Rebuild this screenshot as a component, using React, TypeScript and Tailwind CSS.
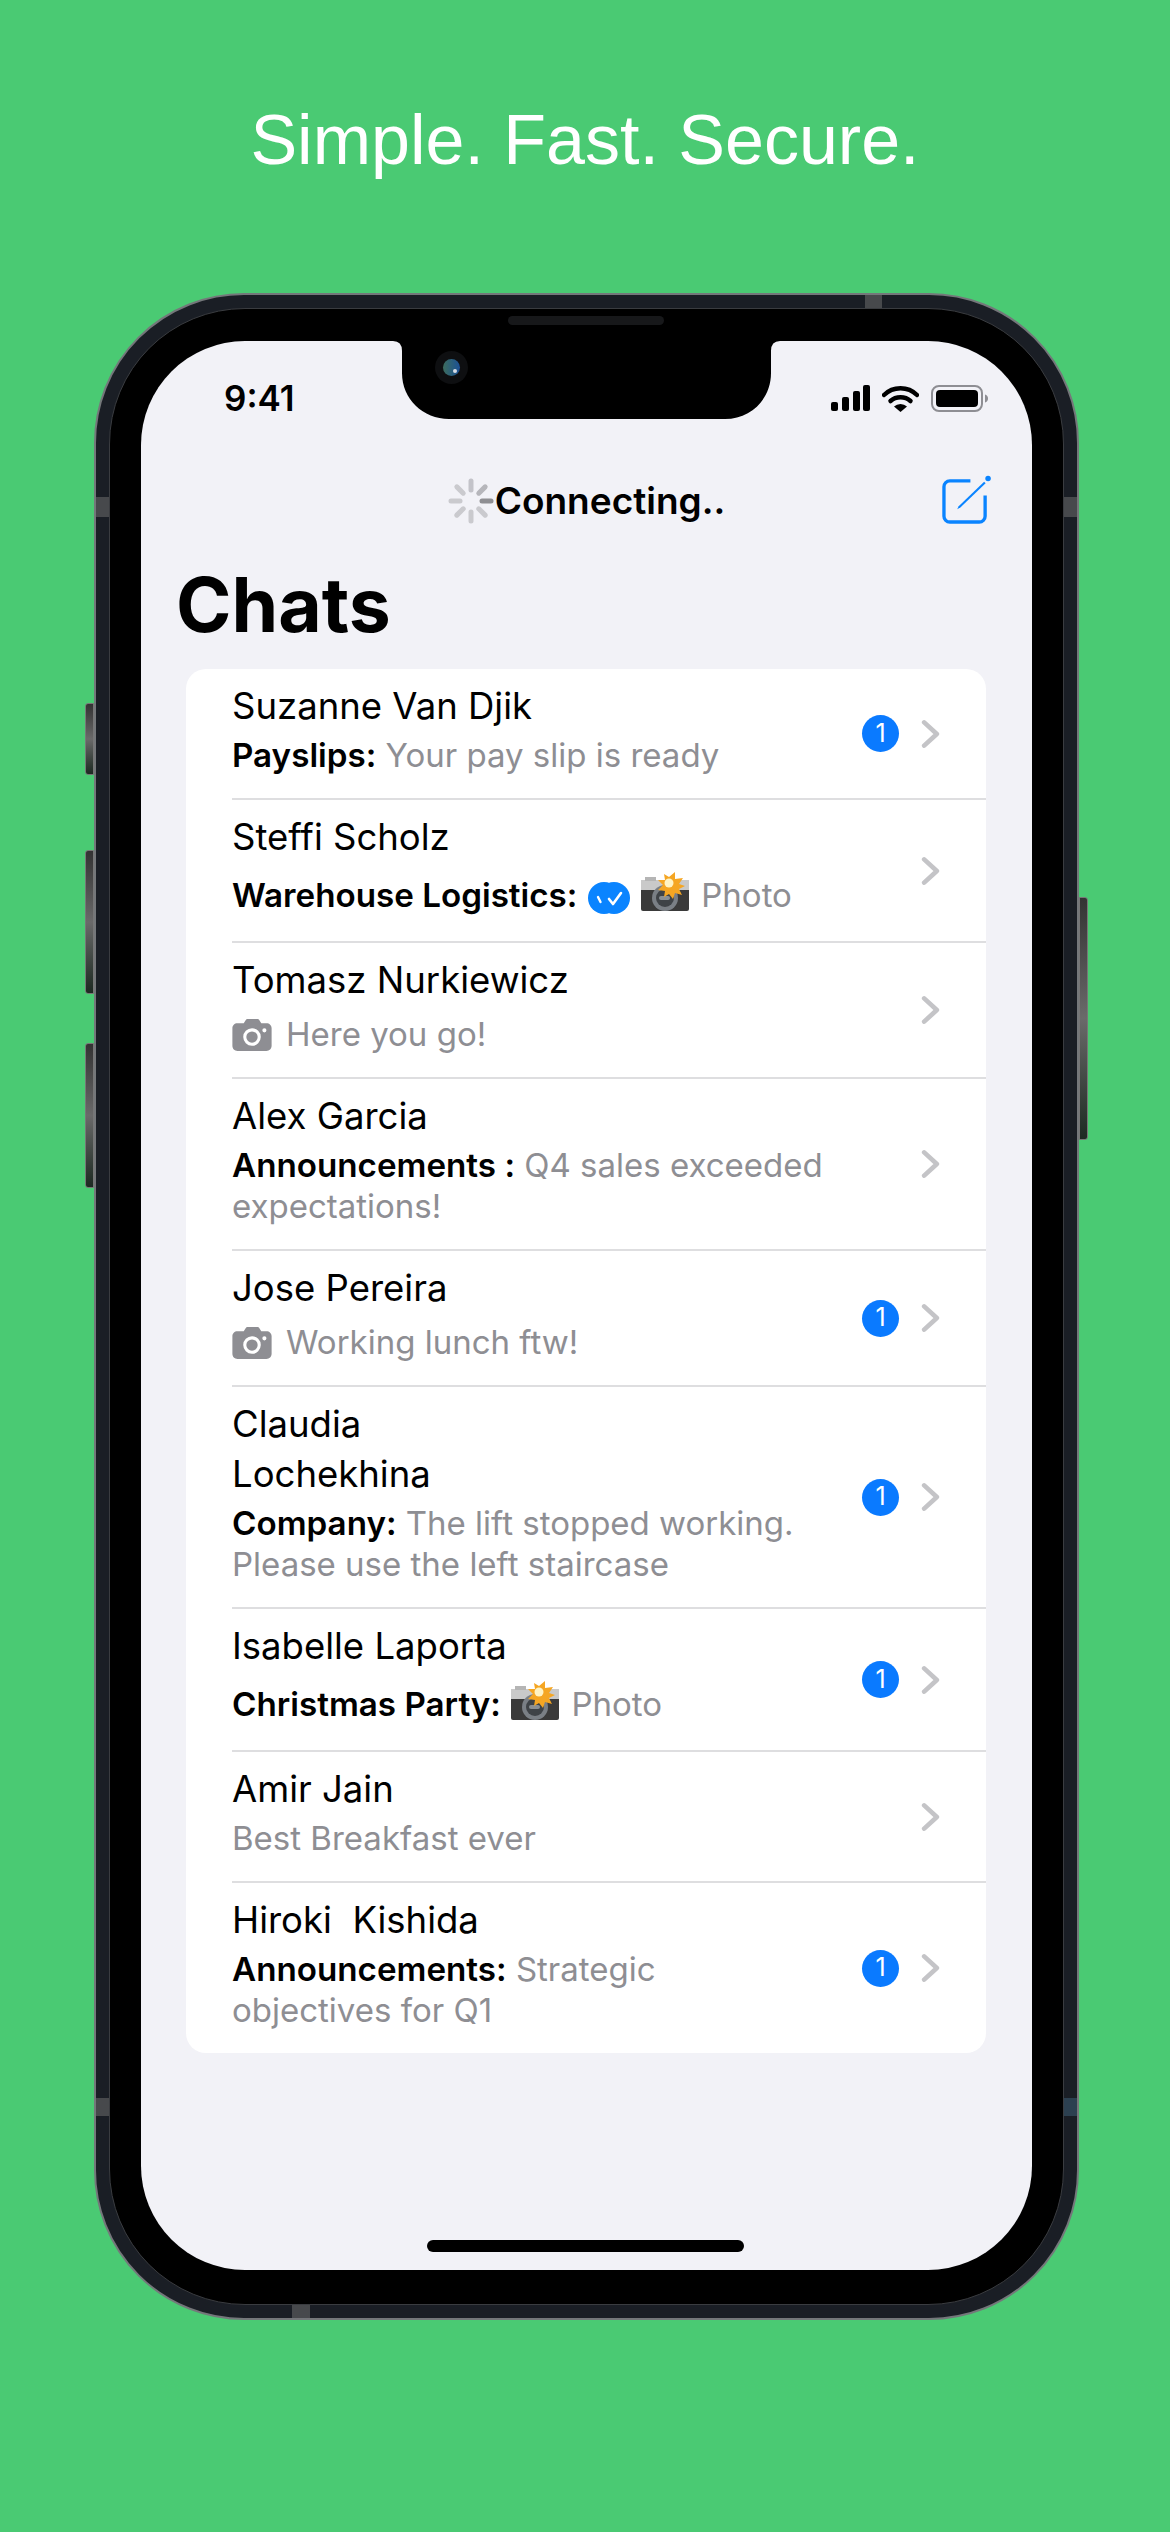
import { ReactNode } from "react";

function CameraGlyph() {
  return (
    <svg width="40" height="32" viewBox="0 0 38 31" className="inline-block align-[-5px] mr-[14px]">
      <path
        fillRule="evenodd"
        fill="#8e8e93"
        d="M5 4h6l2-3c.4-.6 1-1 2-1h9c1 0 1.600.4 2 1l2 3h5c2.800 0 5 2 5 5v17c0 3-2.200 5-5 5H5c-3 0-5-2-5-5V9c0-3 2-5 5-5zm14 5a8.500 8.500 0 1 0 0 17 8.500 8.500 0 0 0 0-17zm0 3a5.500 5.500 0 1 1 0 11 5.500 5.500 0 0 1 0-11zm12-3a2 2 0 1 0 0 4 2 2 0 0 0 0-4z"
      />
    </svg>
  );
}

function FlashCamera() {
  return (
    <svg width="50" height="42" viewBox="0 0 50 42" className="inline-block align-[-6px]">
      <rect x="1" y="9" width="48" height="31" rx="2" fill="#3a3a3a" />
      <rect x="1" y="9" width="48" height="10" fill="#c9c9c9" />
      <rect x="5" y="6" width="11" height="4" fill="#b5b5b5" />
      <circle cx="25" cy="27" r="13" fill="#7a7f85" />
      <circle cx="25" cy="27" r="9" fill="#3f4347" />
      <rect x="19" y="25" width="11" height="4" rx="2" fill="#8a8f94" />
      <path
        fill="#f5a623"
        d="M26 0l3 6 6-5 0 7 8-1-4 6 6 2-6 3 3 6-7-2-2 6-4-5-5 3 1-6-7-1 5-5-5-5 7 0-1-6 5 3z"
      />
      <circle cx="29" cy="12" r="4.500" fill="#fff3c4" />
    </svg>
  );
}

function ReadBadge() {
  return (
    <svg width="42" height="32" viewBox="0 0 42 32" className="inline-block align-[-7px] mx-[1px]">
      <circle cx="16" cy="16" r="16" fill="#0a84ff" />
      <circle cx="26" cy="16" r="16" fill="#0a84ff" />
      <path d="M10 15l2.500 5" stroke="#fff" strokeWidth="2.400" strokeLinecap="round" fill="none" />
      <path d="M21 17l4 5 8-11" stroke="#fff" strokeWidth="2.600" strokeLinecap="round" strokeLinejoin="round" fill="none" />
    </svg>
  );
}

function Chevron() {
  return (
    <svg width="19" height="30" viewBox="0 0 18 28" className="shrink-0">
      <path d="M3 3l12 11L3 25" stroke="#c4c4c7" strokeWidth="4.400" strokeLinecap="round" strokeLinejoin="round" fill="none" />
    </svg>
  );
}

function Spinner() {
  const opacities = [0.75, 0.3, 0.3, 0.3, 0.3, 0.3, 0.35, 0.45];
  return (
    <svg width="46" height="46" viewBox="-23 -23 46 46" className="shrink-0">
      {opacities.map((o, i) => (
        <rect key={i} x="8.500" y="-2.500" width="14" height="5" rx="2.500" fill="#6d6d72" opacity={o} transform={`rotate(${i * 45})`} />
      ))}
    </svg>
  );
}

function ComposeIcon() {
  return (
    <svg width="49" height="49" viewBox="0 0 50 50" className="shrink-0">
      <path d="M29 6H8a6 6 0 0 0-6 6v30a6 6 0 0 0 6 6h30a6 6 0 0 0 6-6V21" stroke="#0a84ff" strokeWidth="3.400" fill="none" />
      <path d="M17 32L43 7l1.500 1.500L19 33l-3.500 2z" fill="#0a84ff" />
      <circle cx="47" cy="3.500" r="2.800" fill="#0a84ff" />
    </svg>
  );
}

function StatusIcons() {
  return (
    <div className="flex items-center gap-[12px]">
      <svg width="39" height="26" viewBox="0 0 39 26">
        <rect x="0" y="17" width="7" height="9" rx="2" fill="#000" />
        <rect x="11" y="12" width="7" height="14" rx="2" fill="#000" />
        <rect x="22" y="6" width="7" height="20" rx="2" fill="#000" />
        <rect x="32" y="0" width="7" height="26" rx="2" fill="#000" />
      </svg>
      <svg width="37" height="27" viewBox="0 0 37 27">
        <path d="M2 10C11 1 26 1 35 10" stroke="#000" strokeWidth="4.500" strokeLinecap="round" fill="none" />
        <path d="M8.500 16C14 11 23 11 28.500 16" stroke="#000" strokeWidth="4.500" strokeLinecap="round" fill="none" />
        <path d="M12 21.500a9.500 9.500 0 0 1 13 0L18.500 27z" fill="#000" />
      </svg>
      <svg width="57" height="27" viewBox="0 0 57 27">
        <rect x="1" y="1" width="50" height="25" rx="7" stroke="#8e8e93" strokeWidth="2" fill="none" />
        <rect x="5" y="5" width="42" height="17" rx="4" fill="#000" />
        <path d="M54 9.500c1.800.5 3 2 3 4s-1.200 3.500-3 4z" fill="#8e8e93" />
      </svg>
    </div>
  );
}

function Group({ children }: { children: ReactNode }) {
  return <b className="font-semibold text-black text-[33.2px]">{children}</b>;
}

type Chat = {
  name: ReactNode;
  sub: ReactNode;
  unread?: boolean;
  subClass?: string;
};

const EMOJI_LINE = "h-[53px] leading-[58px]";
const ICON_LINE = "h-[46px] leading-[50px]";

const chats: Chat[] = [
  {
    name: "Suzanne Van Djik",
    sub: (
      <>
        <Group>Payslips:</Group> Your pay slip is ready
      </>
    ),
    unread: true,
  },
  {
    name: "Steffi Scholz",
    subClass: EMOJI_LINE,
    sub: (
      <>
        <Group>Warehouse Logistics:</Group> <ReadBadge /> <FlashCamera /> <span className="ml-[2px]">Photo</span>
      </>
    ),
  },
  {
    name: "Tomasz Nurkiewicz",
    subClass: ICON_LINE,
    sub: (
      <>
        <CameraGlyph />
        Here you go!
      </>
    ),
  },
  {
    name: "Alex Garcia",
    sub: (
      <>
        <Group>Announcements :</Group> Q4 sales exceeded
        <br />
        expectations!
      </>
    ),
  },
  {
    name: "Jose Pereira",
    subClass: ICON_LINE,
    sub: (
      <>
        <CameraGlyph />
        Working lunch ftw!
      </>
    ),
    unread: true,
  },
  {
    name: (
      <>
        Claudia
        <br />
        Lochekhina
      </>
    ),
    sub: (
      <>
        <Group>Company:</Group> The lift stopped working.
        <br />
        Please use the left staircase
      </>
    ),
    unread: true,
  },
  {
    name: "Isabelle Laporta",
    subClass: EMOJI_LINE,
    sub: (
      <>
        <Group>Christmas Party:</Group> <FlashCamera /> <span className="ml-[2px]">Photo</span>
      </>
    ),
    unread: true,
  },
  {
    name: "Amir Jain",
    sub: "Best Breakfast ever",
  },
  {
    name: "Hiroki\u00a0 Kishida",
    sub: (
      <>
        <Group>Announcements:</Group> Strategic
        <br />
        objectives for Q1
      </>
    ),
    unread: true,
  },
];

function Row({ chat, last }: { chat: Chat; last: boolean }) {
  return (
    <div className={`flex items-center pr-[46px] ${last ? "" : "border-b-[2px] border-[#dedee0]"}`}>
      <div className="flex-1 min-w-0 pt-[12px] pb-[22px]">
        <div className="text-[36.5px] leading-[50px] text-black">{chat.name}</div>
        <div className={`mt-[4px] text-[33px] text-[#8e8e93] whitespace-nowrap ${chat.subClass ?? "leading-[41px]"}`}>{chat.sub}</div>
      </div>
      {chat.unread && (
        <div className="w-[37px] h-[37px] rounded-full bg-[#0a7aff] text-white text-[25px] flex items-center justify-center shrink-0 mr-[22px]">1</div>
      )}
      <Chevron />
    </div>
  );
}

export default function App() {
  return (
    <div className="relative h-[2532px] w-[1170px] overflow-hidden bg-[#4aca73] font-['Inter',sans-serif]">
      <h1 className="pt-[99px] text-center text-[70px] leading-[82px] font-normal text-white font-['Liberation_Sans',sans-serif]">
        Simple. Fast. Secure.
      </h1>

      {/* phone body */}
      <div className="relative mt-[112px] ml-[94px] w-[985px] h-[2027px] rounded-[150px] bg-[#1a1e25] border-[2px] border-[#74777a] p-[13px]">
        {/* side buttons */}
        <div className="absolute left-[-11px] top-[408px] w-[9px] h-[72px] rounded-l-[3px] bg-gradient-to-b from-[#333] via-[#6a6a6a] to-[#1d2a22] border border-[#777]" />
        <div className="absolute left-[-11px] top-[555px] w-[9px] h-[144px] rounded-l-[3px] bg-gradient-to-b from-[#333] via-[#6a6a6a] to-[#1d2a22] border border-[#777]" />
        <div className="absolute left-[-11px] top-[748px] w-[9px] h-[145px] rounded-l-[3px] bg-gradient-to-b from-[#333] via-[#6a6a6a] to-[#1d2a22] border border-[#777]" />
        <div className="absolute right-[-11px] top-[602px] w-[9px] h-[243px] rounded-r-[3px] bg-gradient-to-b from-[#333] via-[#6a6a6a] to-[#1d2a22] border border-[#777]" />

        {/* antenna bands */}
        <div className="absolute left-0 top-[202px] w-[13px] h-[20px] bg-[#47494c]" />
        <div className="absolute right-0 top-[202px] w-[13px] h-[20px] bg-[#47494c]" />
        <div className="absolute left-0 top-[1803px] w-[13px] h-[18px] bg-[#47494c]" />
        <div className="absolute right-0 top-[1803px] w-[13px] h-[18px] bg-[#2c4050]" />
        <div className="absolute left-[769px] top-0 w-[17px] h-[14px] bg-[#47494c]" />
        <div className="absolute left-[196px] bottom-0 w-[18px] h-[13px] bg-[#47494c]" />

        {/* bezel */}
        <div className="relative h-full rounded-[136px] bg-black border border-[#3a3c40] pt-[32px] px-[31px] pb-[34px]">
          {/* speaker */}
          <div className="absolute left-[398px] top-[7px] w-[156px] h-[9px] rounded-full bg-[#17181a]" />

          {/* screen */}
          <div className="relative flex flex-col h-full rounded-[104px] bg-[#f2f2f7] overflow-hidden">
            {/* notch */}
            <svg width="394" height="78" viewBox="0 0 394 78" className="absolute left-[252px] top-0">
              <path d="M0 0Q9 0 9 10V32C9 58 30 78 56 78H332C358 78 378 58 378 32V10Q378 0 387 0z" fill="#000" />
            </svg>
            <div className="absolute left-[294px] top-[10px] w-[33px] h-[33px] rounded-full bg-[#0e0f11] flex items-center justify-center">
              <div className="relative w-[17px] h-[17px] rounded-full bg-gradient-to-r from-[#3d6b5c] to-[#1d4f95]">
                <div className="absolute right-[3px] bottom-[3px] w-[4px] h-[4px] rounded-full bg-[#d8dde6]" />
              </div>
            </div>

            {/* status bar */}
            <div className="flex items-center justify-between h-[114px] pl-[83px] pr-[44px]">
              <span className="text-[35px] font-semibold text-black">9:41</span>
              <StatusIcons />
            </div>

            {/* nav bar */}
            <div className="relative flex items-center justify-center h-[89px] pt-[2px]">
              <div className="flex items-center gap-[1px]">
                <Spinner />
                <span className="text-[37px] font-semibold text-black">Connecting..</span>
              </div>
              <div className="absolute right-[41px] top-[20px]">
                <ComposeIcon />
              </div>
            </div>

            {/* title */}
            <h2 className="pl-[35px] pt-[16px] h-[125px] text-[75px] leading-[90px] font-bold text-black">Chats</h2>

            {/* list */}
            <div className="ml-[45px] mr-[46px] rounded-[20px] bg-white pl-[46px]">
              {chats.map((chat, i) => (
                <Row key={i} chat={chat} last={i === chats.length - 1} />
              ))}
            </div>

            {/* home indicator */}
            <div className="mt-auto mb-[18px] ml-[286px] w-[317px] h-[12px] rounded-full bg-black" />
          </div>
        </div>
      </div>
    </div>
  );
}
